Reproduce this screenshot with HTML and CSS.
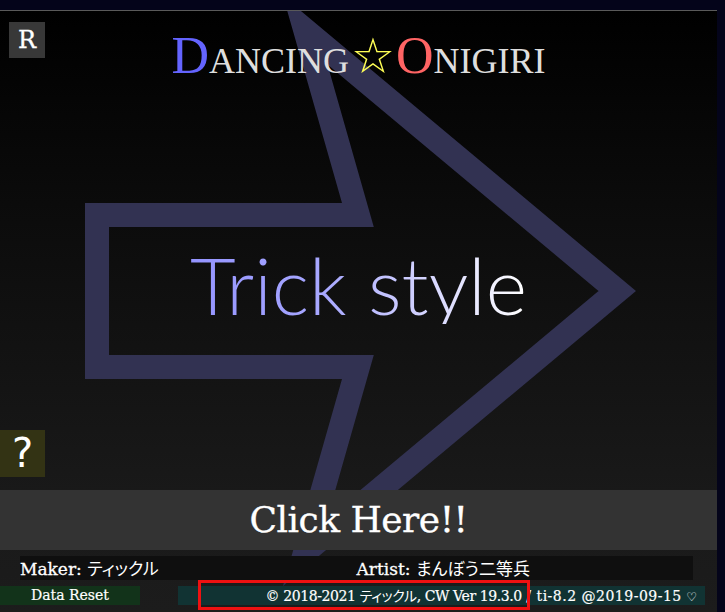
FILE: index.html
```html
<!DOCTYPE html>
<html lang="ja">
<head>
<meta charset="utf-8">
<title>Dancing Onigiri</title>
<link rel="stylesheet" href="styles.css">
</head>
<body>
<div class="topbar"></div>
<div class="game">
  <svg class="arrow" width="717" height="601" viewBox="0 0 717 601" aria-hidden="true">
    <defs>
      <clipPath id="arrowClip">
        <polygon points="85,192 342,192 283,-15 636,280 283,575 342,368 85,368"/>
      </clipPath>
    </defs>
    <polygon class="arrow-line" clip-path="url(#arrowClip)" points="85,192 342,192 283,-15 636,280 283,575 342,368 85,368"/>
  </svg>

  <header class="header">
    <div class="reset-btn">R</div>
    <h1 class="title"><span class="t-blue">D</span><span class="t-gray">ancing</span><span class="t-star">☆</span><span class="t-red">O</span><span class="t-gray">nigiri</span></h1>
    <div></div>
  </header>

  <div class="stage">
    <div class="trick">Trick style</div>
  </div>

  <div class="help-row">
    <div class="help-btn">?</div>
  </div>

  <div class="click-bar">Click Here!!</div>

  <div class="info-row">
    <div class="info-cell">Maker: <span class="jp">ティックル</span></div>
    <div class="info-cell">Artist: <span class="jp">まんぼう二等兵</span></div>
  </div>

  <div class="bottom-row">
    <div class="data-reset">Data Reset</div>
    <div class="copyright"><span class="c-left">© 2018-2021 <span class="jp">ティックル</span>, CW Ver 19.3.0</span> <span class="c-right">/ ti-8.2 @2019-09-15</span> <span class="heart">♡</span></div>
  </div>

  <div class="highlight"></div>
</div>
</body>
</html>
```

FILE: styles.css
```css
* { box-sizing: border-box; }

html, body {
  margin: 0;
  padding: 0;
}

body {
  background: #04041a;
  width: 725px;
  height: 612px;
  overflow: hidden;
  font-family: "DejaVu Serif", "Noto Sans CJK JP", serif;
  color: #ffffff;
}

.topbar {
  height: 10px;
}

.game {
  position: relative;
  width: 717px;
  height: 602px;
  border-top: 1px solid #5a5a5a;
  background: linear-gradient(to bottom, #000000 0%, #0c0c0c 35%, #191919 80%, #1c1c1c 100%);
  display: flex;
  flex-direction: column;
  overflow: hidden;
}

.arrow {
  position: absolute;
  left: 0;
  top: 0;
  z-index: 0;
}

.arrow-line {
  fill: none;
  stroke: #323252;
  stroke-width: 48;
  stroke-linejoin: miter;
  stroke-miterlimit: 10;
}

.header, .stage, .help-row, .click-bar, .info-row, .bottom-row {
  position: relative;
  z-index: 1;
}

.header {
  height: 100px;
  display: grid;
  grid-template-columns: 1fr auto 1fr;
  align-items: start;
}

.reset-btn {
  margin: 11px 0 0 9px;
  width: 36px;
  height: 36px;
  background: #383838;
  color: #ffffff;
  font-family: "DejaVu Serif", serif;
  font-size: 24px;
  line-height: 36px;
  text-align: center;
  -webkit-text-stroke: 0.3px #ffffff;
}

.title {
  margin: 19px 0 0 0;
  font-family: "Liberation Serif", "DejaVu Sans", serif;
  font-weight: normal;
  font-size: 52px;
  line-height: 52px;
  font-variant: small-caps;
  white-space: nowrap;
}

.t-blue { color: #6464ff; }
.t-red { color: #ff6464; }
.t-gray { color: #dedede; }
.t-star {
  color: #ffff55;
  font-family: "DejaVu Sans", sans-serif;
  font-size: 49px;
  line-height: 40px;
  font-variant: normal;
  margin: 0 1px 0 2px;
}

.stage {
  height: 319px;
  padding-top: 134px;
  text-align: center;
}

.trick {
  display: inline-block;
  font-family: "Lato", "Open Sans", sans-serif;
  font-weight: 300;
  font-size: 79px;
  line-height: 79px;
  background: linear-gradient(to right, #9494ff 0%, #a8a8ff 40%, #dcdcff 75%, #ffffff 100%);
  -webkit-background-clip: text;
  background-clip: text;
  color: transparent;
}

.help-row {
  height: 60px;
}

.help-btn {
  width: 45px;
  height: 47px;
  background: #333314;
  color: #ffffff;
  font-family: "DejaVu Sans", sans-serif;
  font-size: 40px;
  line-height: 47px;
  text-align: center;
}

.click-bar {
  height: 60px;
  background: #333333;
  color: #ffffff;
  font-family: "DejaVu Serif", serif;
  font-size: 36px;
  line-height: 60px;
  text-align: center;
  letter-spacing: -0.5px;
  -webkit-text-stroke: 0.3px #ffffff;
}

.info-row {
  margin: 6px 24px 0 20px;
  height: 24px;
  display: grid;
  grid-template-columns: 1fr 1fr;
  background: #0f0f0f;
}

.info-cell {
  font-size: 17px;
  line-height: 24px;
  white-space: nowrap;
  font-family: "DejaVu Serif", "Noto Sans CJK JP", serif;
  -webkit-text-stroke: 0.3px #ffffff;
}

.jp {
  font-family: "Noto Sans CJK JP", sans-serif;
  font-feature-settings: "palt";
  -webkit-text-stroke: 0;
}

.bottom-row {
  margin-top: 6px;
  height: 19px;
  display: flex;
}

.data-reset {
  width: 140px;
  background: #12331a;
  font-size: 14px;
  line-height: 19px;
  text-align: center;
  -webkit-text-stroke: 0.2px #ffffff;
}

.copyright {
  margin-left: 38px;
  width: 527px;
  background: #113333;
  font-size: 14px;
  line-height: 19px;
  text-align: right;
  padding-right: 8px;
  white-space: nowrap;
  font-family: "DejaVu Serif", "Noto Sans CJK JP", serif;
  -webkit-text-stroke: 0.2px #ffffff;
}

.c-left {
  letter-spacing: -0.4px;
}

.c-right {
  letter-spacing: 0.5px;
}

.heart {
  font-family: "DejaVu Sans", sans-serif;
  font-size: 12px;
  -webkit-text-stroke: 0;
}

.highlight {
  position: absolute;
  z-index: 2;
  left: 198px;
  top: 569px;
  width: 332px;
  height: 30px;
  border: 3px solid #ee1111;
}
```
